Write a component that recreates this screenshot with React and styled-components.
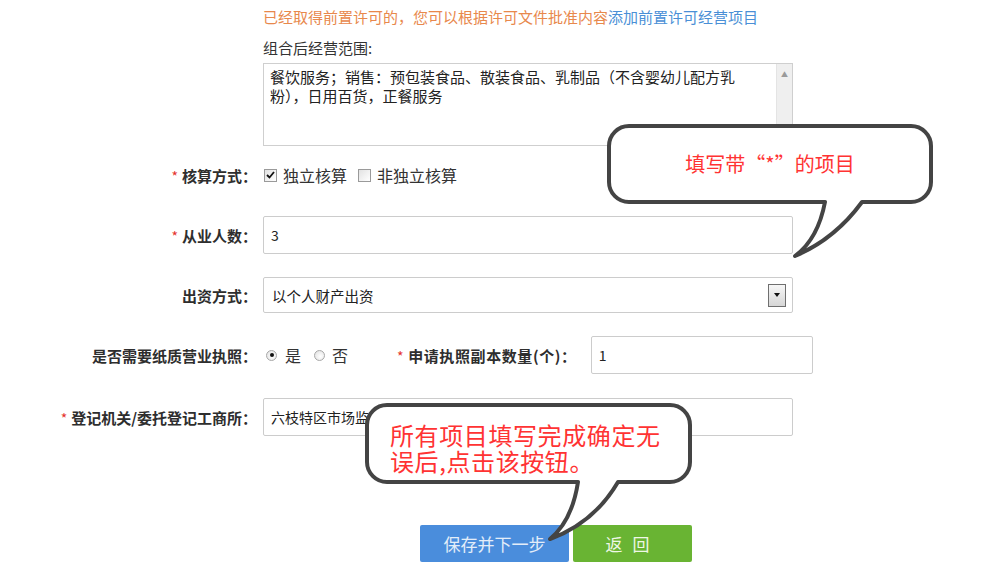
import React from "react";
import styled, { createGlobalStyle } from "styled-components";

const GlobalStyle = createGlobalStyle`
  html, body { margin: 0; padding: 0; background: #fff; }
  body { font-family: "Noto Sans CJK SC", "Noto Sans", sans-serif; color: #333; }
`;

const Page = styled.div`
  position: relative;
  width: 981px;
  height: 567px;
  overflow: hidden;
  padding-top: 7px;
  box-sizing: border-box;
`;

const Indent = styled.div`
  padding-left: 263px;
`;

const Notice = styled.div`
  font-size: 15px;
  line-height: 20px;
  color: #e8884c;
  white-space: nowrap;

  a {
    color: #4a8fd6;
    text-decoration: none;
  }
`;

const ScopeTitle = styled.div`
  margin-top: 12px;
  font-size: 15px;
  line-height: 18px;
  color: #333;
`;

const ScopeBox = styled.div`
  margin-top: 6px;
  width: 530px;
  height: 83px;
  box-sizing: border-box;
  border: 1px solid #cfcfcf;
  display: flex;
`;

const ScopeText = styled.textarea`
  flex: 1;
  border: none;
  outline: none;
  resize: none;
  padding: 3px 30px 3px 6px;
  font-family: inherit;
  font-size: 15px;
  line-height: 19px;
  color: #222;
  overflow: hidden;
`;

const ScrollTrack = styled.div`
  width: 16px;
  background: #efefef;
  border-left: 1px solid #e4e4e4;
  display: flex;
  justify-content: center;
  padding-top: 6px;
  box-sizing: border-box;
  font-size: 7px;
  line-height: 8px;
  color: #9a9a9a;
`;

const Row = styled.div`
  display: flex;
  align-items: center;
  height: 38px;
  margin-top: ${(p) => p.$mt || 22}px;
`;

const Label = styled.div`
  width: 263px;
  flex: none;
  text-align: right;
  padding-right: 6px;
  box-sizing: border-box;
  font-size: 15px;
  font-weight: 700;
  color: #2e2e2e;
  white-space: nowrap;
`;

const Star = styled.span`
  color: #e5332e;
  font-weight: 400;
  font-size: 14px;
  margin-right: 4px;
`;

const OptionGroup = styled.div`
  display: flex;
  align-items: center;
  width: ${(p) => (p.$w ? `${p.$w}px` : "auto")};
  flex: none;
`;

const CheckBox = styled.span`
  width: 13px;
  height: 13px;
  box-sizing: border-box;
  border: 1px solid #9a9a9a;
  background: linear-gradient(135deg, #e2e2e2, #ffffff);
  display: inline-flex;
  align-items: center;
  justify-content: center;
  margin-left: 1px;
`;

const Radio = styled.span`
  width: 11px;
  height: 11px;
  box-sizing: border-box;
  border-radius: 50%;
  border: 1px solid #a8a8a8;
  background: radial-gradient(circle at 60% 60%, #ffffff, #dedede);
  display: inline-flex;
  align-items: center;
  justify-content: center;
  margin-left: 3px;

  &::after {
    content: "";
    width: 4px;
    height: 4px;
    border-radius: 50%;
    background: ${(p) => (p.$on ? "#111" : "transparent")};
  }
`;

const OptionText = styled.span`
  font-size: 16px;
  color: #333;
  margin-left: ${(p) => p.$ml || 6}px;
  margin-right: ${(p) => p.$mr || 10}px;
`;

const TextInput = styled.div`
  width: ${(p) => p.$w || 530}px;
  height: 38px;
  box-sizing: border-box;
  border: 1px solid #cccccc;
  border-radius: 2px;
  padding: 0 7px;
  display: flex;
  align-items: center;
  font-size: 14px;
  color: #222;
  margin-left: ${(p) => p.$ml || 0}px;
  white-space: nowrap;
  overflow: hidden;
`;

const SelectBox = styled.div`
  width: 530px;
  height: 36px;
  box-sizing: border-box;
  border: 1px solid #cccccc;
  border-radius: 2px;
  padding: 0 6px 0 8px;
  display: flex;
  align-items: center;
  justify-content: space-between;
  font-size: 14.5px;
  color: #222;
`;

const ArrowButton = styled.span`
  width: 18px;
  height: 23px;
  box-sizing: border-box;
  border: 1px solid #6f6f6f;
  background: linear-gradient(#f7f7f7, #d6d6d6);
  display: inline-flex;
  align-items: center;
  justify-content: center;

  &::after {
    content: "";
    border-left: 3.5px solid transparent;
    border-right: 3.5px solid transparent;
    border-top: 4px solid #111;
  }
`;

const SubLabel = styled.div`
  font-size: 15px;
  font-weight: 700;
  color: #2e2e2e;
  white-space: nowrap;
  letter-spacing: 0.6px;
`;

const ButtonBar = styled.div`
  display: flex;
  gap: 4px;
  margin-top: 89px;
  padding-left: 420px;
`;

const Button = styled.button`
  width: ${(p) => p.$w}px;
  height: 37px;
  border: none;
  border-radius: 2px;
  background: ${(p) => p.$bg};
  color: ${(p) => p.$fg};
  font-family: inherit;
  font-size: 17px;
  letter-spacing: ${(p) => p.$ls || 0}px;
  cursor: pointer;
  padding: 0;
`;

const Bubble = styled.div`
  position: absolute;
  left: ${(p) => p.$x}px;
  top: ${(p) => p.$y}px;
  width: ${(p) => p.$w}px;
  height: ${(p) => p.$h}px;

  svg {
    position: absolute;
    left: 0;
    top: 0;
  }
`;

const BubbleText = styled.div`
  position: absolute;
  left: ${(p) => p.$x}px;
  top: ${(p) => p.$y}px;
  width: ${(p) => p.$w}px;
  text-align: ${(p) => p.$align || "left"};
  font-size: ${(p) => p.$size}px;
  line-height: ${(p) => p.$lh}px;
  letter-spacing: ${(p) => p.$ls || 0}px;
  color: #ff3333;
`;

const bubbleOne =
  "M 29 8 H 311 A 20 20 0 0 1 331 28 V 64 A 20 20 0 0 1 311 84 H 262 Q 235 121 195 138 Q 218 121 225 84 H 29 A 20 20 0 0 1 9 64 V 28 A 20 20 0 0 1 29 8 Z";
const bubbleTwo =
  "M 29 8 H 312 A 20 20 0 0 1 332 28 V 65 A 20 20 0 0 1 312 85 H 260 Q 236 126 192 142 Q 214 124 220 85 H 29 A 20 20 0 0 1 9 65 V 28 A 20 20 0 0 1 29 8 Z";

const Check = () => (
  <svg width="9" height="8" viewBox="0 0 9 8">
    <path d="M1 4 L3.5 6.5 L8 1" fill="none" stroke="#111" strokeWidth="1.8" />
  </svg>
);

const App = () => {
  return (
    <Page>
      <GlobalStyle />
      <Indent>
        <Notice>
          已经取得前置许可的，您可以根据许可文件批准内容<a href="#">添加前置许可经营项目</a>
        </Notice>
        <ScopeTitle>组合后经营范围:</ScopeTitle>
        <ScopeBox>
          <ScopeText
            readOnly
            value="餐饮服务；销售：预包装食品、散装食品、乳制品（不含婴幼儿配方乳粉），日用百货，正餐服务"
          />
          <ScrollTrack>▲</ScrollTrack>
        </ScopeBox>
      </Indent>

      <Row $mt={10}>
        <Label><Star>*</Star>核算方式：</Label>
        <OptionGroup>
          <CheckBox><Check /></CheckBox>
          <OptionText>独立核算</OptionText>
          <CheckBox />
          <OptionText>非独立核算</OptionText>
        </OptionGroup>
      </Row>

      <Row>
        <Label><Star>*</Star>从业人数：</Label>
        <TextInput>3</TextInput>
      </Row>

      <Row>
        <Label>出资方式：</Label>
        <SelectBox>
          <span>以个人财产出资</span>
          <ArrowButton />
        </SelectBox>
      </Row>

      <Row>
        <Label>是否需要纸质营业执照：</Label>
        <OptionGroup $w={134}>
          <Radio $on />
          <OptionText $ml={8}>是</OptionText>
          <Radio />
          <OptionText $ml={7}>否</OptionText>
        </OptionGroup>
        <SubLabel><Star>*</Star>申请执照副本数量(个)：</SubLabel>
        <TextInput $w={222} $ml={14}>1</TextInput>
      </Row>

      <Row $mt={24}>
        <Label><Star>*</Star>登记机关/委托登记工商所：</Label>
        <TextInput>六枝特区市场监督管理局</TextInput>
      </Row>

      <ButtonBar>
        <Button $w={149} $bg="#4a8ddc" $fg="#e3edf9">保存并下一步</Button>
        <Button $w={119} $bg="#69b433" $fg="#eef7e6" $ls={10}>返回</Button>
      </ButtonBar>

      <Bubble $x={600} $y={118} $w={340} $h={145}>
        <svg width="340" height="145" viewBox="0 0 340 145">
          <path d={bubbleOne} fill="#fff" stroke="#444" strokeWidth="4" strokeLinejoin="round" />
        </svg>
        <BubbleText $x={9} $y={33} $w={322} $align="center" $size={20} $lh={26}>
          填写带“*”的项目
        </BubbleText>
      </Bubble>

      <Bubble $x={358} $y={397} $w={345} $h={150}>
        <svg width="345" height="150" viewBox="0 0 345 150">
          <path d={bubbleTwo} fill="#fff" stroke="#444" strokeWidth="4" strokeLinejoin="round" />
        </svg>
        <BubbleText $x={32} $y={25} $w={290} $size={24} $lh={26} $ls={0.6}>
          所有项目填写完成确定无误后,点击该按钮。
        </BubbleText>
      </Bubble>
    </Page>
  );
};

export default App;
